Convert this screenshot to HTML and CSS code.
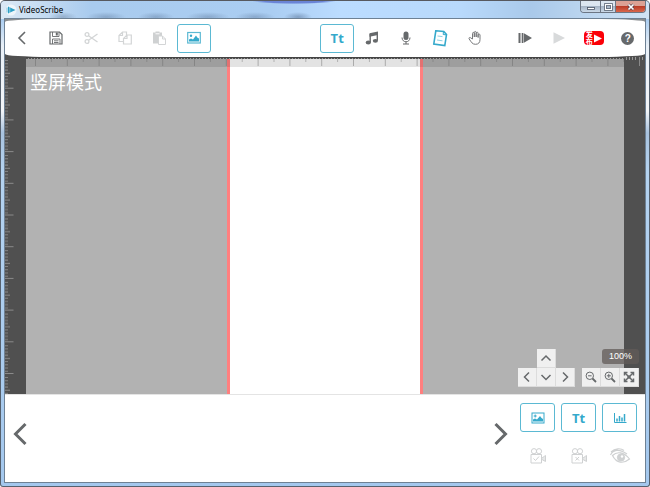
FILE: index.html
```html
<!DOCTYPE html>
<html lang="zh">
<head>
    <meta charset="UTF-8">
    <meta name="viewport" content="width=device-width, initial-scale=1.0">
    <title>VideoScribe</title>
    <link rel="stylesheet" href="styles.css">
</head>
<body>
    <div class="window">
        <header class="titlebar">
            <svg class="logo" width="12" height="12" viewBox="0 0 12 12"><circle cx="6" cy="6" r="5.500" fill="#eef5fa"/><path d="M3 2.500L10.500 6 3 9.500z" fill="#2c9fc6"/><path d="M2 3.500v5" stroke="#7cc4de"/><path d="M4.800 3v6" stroke="#d6edf5" stroke-width=".6"/></svg>
            <span class="title">VideoScribe</span>
            <div class="controls">
                <button class="min" aria-label="最小化"><svg width="10" height="8" viewBox="0 0 10 8"><rect x="1.500" y="4.500" width="7" height="2" fill="#fff" stroke="#4a5566" stroke-width=".8"/></svg></button>
                <button class="max" aria-label="最大化"><svg width="9" height="8" viewBox="0 0 9 8"><rect x="1.500" y="1.500" width="6" height="5" fill="none" stroke="#4a5566" stroke-width="2.600"/><rect x="1.500" y="1.500" width="6" height="5" fill="none" stroke="#fff" stroke-width="1.200"/></svg></button>
                <button class="close" aria-label="关闭"><svg width="10" height="8" viewBox="0 0 10 8"><path d="M2.500 1.500l5 5M7.500 1.500l-5 5" stroke="#54404a" stroke-width="3"/><path d="M2.500 1.500l5 5M7.500 1.500l-5 5" stroke="#fff" stroke-width="1.700"/></svg></button>
            </div>
        </header>

        <main class="client">
            <!-- 工具栏 -->
            <div class="toolbar-wrap">
                <nav class="toolbar">
                    <div class="group">
                        <button aria-label="返回"><svg width="16" height="16" viewBox="0 0 16 16"><path d="M11 2L5 8l6 6" fill="none" stroke="#66696b" stroke-width="1.600"/></svg></button>
                        <button aria-label="保存"><svg width="16" height="16" viewBox="0 0 16 16" fill="none" stroke="#66696b"><path d="M2 2h9.500L14 4.500V14H2z" stroke-width="1.200"/><path d="M4.500 2v4.500h6.500V2M4.500 14V9h7.500v5M6 10.800h4.500M6 12.500h4.500" stroke-width=".9"/><path d="M8.800 2.500v3" stroke-width="2"/></svg></button>
                        <button aria-label="剪切" disabled><svg width="16" height="16" viewBox="0 0 16 16" fill="none" stroke="#d3d5d6" stroke-width="1.300"><circle cx="4" cy="4.500" r="1.900"/><circle cx="4" cy="11.500" r="1.900"/><path d="M5.500 5.700L14.500 12M5.500 10.300L14.500 4"/></svg></button>
                        <button aria-label="复制" disabled><svg width="16" height="16" viewBox="0 0 16 16" fill="none" stroke="#d3d5d6" stroke-width="1.200"><path d="M6.500 11.500H2V5.500l3.500-3.500H9.500v3.500M5.500 2v3.500H2"/><path d="M10 5h4.300v9H6.500V8.500zM10 5v3.500H6.500"/></svg></button>
                        <button aria-label="粘贴" disabled><svg width="16" height="16" viewBox="0 0 16 16"><path d="M2 2.500h2.500v-1h4v1H11v3.500H7v7.500H2z" fill="#cfd1d2"/><path d="M4.500 3.800h4" stroke="#fff"/><path d="M7.500 6h4l3 3v5.500h-7zM11.500 6v3h3" fill="#fff" stroke="#d3d5d6"/></svg></button>
                        <button class="boxed" aria-label="图片"><svg width="16" height="16" viewBox="0 0 16 16"><rect x="1.700" y="2.500" width="12.600" height="10.500" fill="none" stroke="#5bb9d3" stroke-width="1.200"/><path d="M3 11.500V9.500l2-1 2 1 3-4 1.300 2 1.700 1v3z" fill="#35a9cb"/><circle cx="5" cy="5.800" r="1.200" fill="#35a9cb"/></svg></button>
                    </div>
                    <div class="group group-mid">
                        <button class="boxed">Tt</button>
                        <button aria-label="音乐"><svg width="16" height="16" viewBox="0 0 16 16" fill="#66696b"><path d="M5.500 3.200L14 1.500V5L5.500 6.700z"/><path d="M6.200 4v8.500M13.300 3v7.500" stroke="#66696b" stroke-width="1.400"/><ellipse cx="4.300" cy="12.500" rx="2.600" ry="1.900"/><ellipse cx="11.400" cy="10.800" rx="2.600" ry="1.900"/></svg></button>
                        <button aria-label="录音"><svg width="16" height="16" viewBox="0 0 16 16"><rect x="5.500" y="1.500" width="5" height="8.500" rx="2.500" fill="#66696b"/><path d="M4 7.500c0 5.700 8 5.700 8 0M8 12v2M5 14h6" fill="none" stroke="#66696b"/></svg></button>
                        <button aria-label="纸张"><svg width="18" height="18" viewBox="0 0 18 18" fill="none" stroke="#35a9cb"><path d="M4.800 1.800l8 .7 2.700 3-1.700 11L2.800 15z" stroke-width="1.600"/><path d="M12.500 2.500l-.3 3 3 .3"/><path d="M6.500 7l5 .6M6 11l5.500.8" stroke="#8ed0e2"/></svg></button>
                        <button aria-label="移动"><svg width="16" height="16" viewBox="0 0 16 16"><path d="M5.500 9V3.500c0-1.500 1.800-1.500 1.800 0V7 2.500c0-1.400 1.900-1.400 1.900 0V7 3.200c0-1.400 1.900-1.300 1.900 0V7.500 5c0-1.300 1.900-1.300 1.900 0v4.500c0 3-1.500 4.800-4.500 4.800-3.300 0-4-2-6.300-5.300-.8-1.400.8-2 1.800-.9z" fill="#fff" stroke="#77797b"/></svg></button>
                    </div>
                    <div class="group group-end">
                        <button aria-label="从当前播放"><svg width="16" height="16" viewBox="0 0 16 16" fill="#66696b"><path d="M1.500 3H3.500v10h-2zM4.700 3h1.300v10H4.700zM6.500 3l8.500 5-8.500 5z"/></svg></button>
                        <button aria-label="播放" disabled><svg width="16" height="16" viewBox="0 0 16 16"><path d="M2.500 2.200L14 8 2.500 13.800z" fill="#d8dadb"/></svg></button>
                        <button class="publish" aria-label="发布视频"><span class="badge"><span class="stamp">发布</span><svg width="9" height="9" viewBox="0 0 9 9"><path d="M1 .5l8 4-8 4z" fill="#fff"/></svg></span></button>
                        <button class="help" aria-label="帮助"><span>?</span></button>
                    </div>
                </nav>
            </div>

            <!-- 画布 -->
            <section class="stage">
                <div class="paper"></div>
                <svg class="ruler-top" width="100%" height="10">
                    <defs>
                        <pattern id="ticksTop" x="10" width="31.800" height="10" patternUnits="userSpaceOnUse">
                            <path d="M31.300 2v7" stroke="#666" opacity=".45"/>
                            <path d="M15.400 2v3" stroke="#666" opacity=".4"/>
                        </pattern>
                        <pattern id="teeth" width="3" height="3" patternUnits="userSpaceOnUse">
                            <path d="M0 .5h3" stroke="#444"/>
                            <path d="M0 1.500h2" stroke="#505050"/><path d="M2 1.500h1" stroke="#999"/>
                        </pattern>
                    </defs>
                    <rect width="100%" height="10" fill="#000" opacity=".11"/>
                    <rect width="100%" height="10" fill="url(#ticksTop)"/>
                    <rect width="100%" height="2" fill="url(#teeth)"/>
                </svg>
                <svg class="ruler-left" width="12" height="100%">
                    <defs>
                        <pattern id="ticksLeft" width="12" height="31.700" patternUnits="userSpaceOnUse">
                            <path d="M0 3.500h3M0 6.700h3M0 9.800h3M0 13h3M0 19.300h3M0 22.500h3M0 25.700h3M0 28.900h3" stroke="#858585"/>
                            <path d="M0 16.200h5" stroke="#8a8a8a"/><path d="M0 31.200h8.500" stroke="#8a8a8a"/>
                        </pattern>
                    </defs>
                    <rect width="12" height="100%" fill="url(#ticksLeft)"/>
                </svg>
                <svg class="ruler-end" width="21" height="10" viewBox="0 0 21 10"><path d="M2.500 0v3M5.500 0v3M8.500 0v3M11.500 0v3M18.500 0v3" stroke="#999"/><path d="M15.500 0v9" stroke="#8a8a8a"/></svg>
                <h1 class="mode">竖屏模式</h1>
                <div class="viewtools">
                    <div class="pad">
                        <button class="up" aria-label="上移"><svg width="12" height="12" viewBox="0 0 12 12"><path d="M1.500 8.500L6 4l4.500 4.500"/></svg></button>
                        <button class="left" aria-label="左移"><svg width="12" height="12" viewBox="0 0 12 12"><path d="M8 1.500L3.500 6 8 10.500"/></svg></button>
                        <button class="down" aria-label="下移"><svg width="12" height="12" viewBox="0 0 12 12"><path d="M1.500 4L6 8.500 10.500 4"/></svg></button>
                        <button class="right" aria-label="右移"><svg width="12" height="12" viewBox="0 0 12 12"><path d="M4 1.500L8.500 6 4 10.500"/></svg></button>
                    </div>
                    <div class="zoom">
                        <output class="percent">100%</output>
                        <div class="zoom-row">
                            <button aria-label="缩小"><svg class="thin" width="12" height="12" viewBox="0 0 12 12"><circle cx="4.800" cy="4.800" r="3.700"/><path d="M3 4.800h3.600"/><path d="M7.500 7.500L11 11" stroke-width="1.800"/></svg></button>
                            <button aria-label="放大"><svg class="thin" width="12" height="12" viewBox="0 0 12 12"><circle cx="4.800" cy="4.800" r="3.700"/><path d="M2.800 4.800h4M4.800 2.800v4"/><path d="M7.500 7.500L11 11" stroke-width="1.800"/></svg></button>
                            <button aria-label="适合窗口"><svg width="12" height="12" viewBox="0 0 12 12"><path d="M2 2l8 8M10 2l-8 8" /><path d="M1.500 4.500v-3h3M7.500 1.500h3v3M1.500 7.500v3h3M7.500 10.500h3v-3"/><rect x="4.500" y="4.500" width="3" height="3" fill="#66696b" stroke="none"/></svg></button>
                        </div>
                    </div>
                </div>
            </section>

            <!-- 时间轴 -->
            <section class="timeline">
                <button class="scroll" aria-label="向前"><svg width="16" height="24" viewBox="0 0 16 24"><path d="M12.500 2L2.500 12l10 10"/></svg></button>
                <div class="track"></div>
                <button class="scroll" aria-label="向后"><svg width="16" height="24" viewBox="0 0 16 24"><path d="M3.500 2l10 10-10 10"/></svg></button>
                <div class="adders">
                    <button class="boxed" aria-label="添加图片"><svg width="14" height="14" viewBox="0 0 14 14"><rect x="1" y="2" width="12" height="10" fill="none" stroke="#35a9cb"/><path d="M2 10.500v-2l2-1 2 1 3-3.500 1.500 2L12 8v2.500z" fill="#35a9cb"/><path d="M4.200 3.500v3M2.700 5h3" stroke="#35a9cb"/></svg></button>
                    <button class="boxed">Tt</button>
                    <button class="boxed" aria-label="添加图表"><svg width="14" height="14" viewBox="0 0 14 14" fill="none" stroke="#35a9cb"><path d="M1.500 2v9.500H13.500"/><path d="M4 10.500V7.500M6.500 10.500V5M9 10.500V6.500M11.500 10.500V3" stroke-width="1.500"/></svg></button>
                    <button class="ghost" aria-label="设置镜头" disabled><svg width="18" height="18" viewBox="0 0 18 18"><circle cx="5" cy="4.200" r="2.600"/><circle cx="10" cy="4.200" r="2.600"/><path d="M2 7.500h10.500V16H2zM4.500 11.500l2 2 3.500-4"/><path d="M13 11l3.500-2.500v6L13 12.500zM15 10v4" /></svg></button>
                    <button class="ghost" aria-label="清除镜头" disabled><svg width="18" height="18" viewBox="0 0 18 18"><circle cx="5" cy="4.200" r="2.600"/><circle cx="10" cy="4.200" r="2.600"/><path d="M2 7.500h10.500V16H2zM5.500 10l3.500 3.500M9 10l-3.500 3.500"/><path d="M13 11l3.500-2.500v6L13 12.500zM15 10v4"/></svg></button>
                    <button class="ghost" aria-label="预览" disabled><svg width="22" height="18" viewBox="0 0 22 18"><path d="M3.500 8.500C8 4 15 5 20.500 12c-6 5-13 4.500-17-3.500zM1.500 8C4 3 10 1 18 7M2 5C6 1 12 1 15 3.500" stroke-width="1.200"/><circle cx="12" cy="10.500" r="3.600" fill="#cfd1d2"/><circle cx="13" cy="9.500" r="1.200" fill="#fff" stroke="none"/></svg></button>
                </div>
            </section>
        </main>
    </div>
</body>
</html>
```
FILE: styles.css
```css
* {
    box-sizing: border-box;
}
body {
    margin: 0;
    font-family: "Liberation Sans", "Noto Sans CJK SC", sans-serif;
}
button {
    display: flex;
    align-items: center;
    justify-content: center;
    margin: 0;
    padding: 0;
    border: none;
    background: none;
    cursor: pointer;
}
svg {
    display: block;
    flex: none;
}
.window {
    display: flex;
    flex-direction: column;
    height: 100vh;
    padding: 0 4px 4px;
    border: 1px solid #56616e;
    border-top-color: #57595f;
    border-radius: 5px 5px 3px 3px;
    background: linear-gradient(to bottom, #a9ccf0 18px, #e9f0f7 45px, #f3f5f8 110px, #a9c3df 132px, #b5d3f0 170px, #a4c8ee 100%);
}

/* 标题栏 */
.titlebar {
    display: flex;
    align-items: center;
    height: 18px;
    margin: 0 -4px;
    padding-left: 4px;
    border-radius: 4px 4px 0 0;
    background:
        radial-gradient(ellipse 14px 5px at 62px 16px, rgba(60, 85, 120, 0.3), transparent),
        radial-gradient(ellipse 20px 5px at 105px 16px, rgba(60, 85, 120, 0.3), transparent),
        radial-gradient(ellipse 18px 5px at 155px 16px, rgba(60, 85, 120, 0.3), transparent),
        radial-gradient(ellipse 22px 5px at 207px 16px, rgba(60, 85, 120, 0.3), transparent),
        radial-gradient(ellipse 20px 5px at 254px 16px, rgba(60, 85, 120, 0.3), transparent),
        radial-gradient(ellipse 14px 5px at 297px 16px, rgba(60, 85, 120, 0.4), transparent),
        radial-gradient(ellipse 42px 3px at 293px 0, #6a84d6 70%, transparent),
        linear-gradient(to right, #dce9f5, #a9cbee 90px, #aacdf2 270px, #bbdcff 340px, #b8d9fb 460px, #a9c9ea 530px, #d0e3f5);
}
.logo {
    margin-right: 2px;
}
.title {
    font-family: "Noto Sans", sans-serif;
    font-size: 8px;
    line-height: 16px;
    color: #000;
}
.controls {
    display: flex;
    align-self: flex-start;
    margin: 0 3px 0 auto;
    border: 1px solid #6c7684;
    border-top: none;
    border-radius: 0 0 4px 4px;
    overflow: hidden;
}
.controls button {
    height: 11px;
    background: linear-gradient(#dce6f0 45%, #a6b5c6 50%, #cbd9e8);
    border-right: 1px solid #6c7684;
}
.controls .min {
    width: 20px;
}
.controls .max {
    width: 15px;
}
.controls .close {
    width: 29px;
    border-right: none;
    background: linear-gradient(#dca194 45%, #bb3d28 50%, #d9674c);
}

.client {
    display: flex;
    flex-direction: column;
    flex: 1;
    min-height: 0;
    background: #fff;
    outline: 1px solid #6e8194;
}

/* 工具栏 */
.toolbar-wrap {
    background: linear-gradient(#8a8d90 50%, #505050 50%);
}
.toolbar {
    display: grid;
    grid-template-columns: 206fr 109fr 172fr 16fr 137fr;
    align-items: center;
    height: 38px;
    border-radius: 45px / 3px;
    background: #fff;
}
.group {
    display: grid;
    grid-auto-flow: column;
    grid-auto-columns: 1fr;
}
.group-mid {
    grid-column: 3;
}
.group-end {
    grid-column: 5;
}
.group button {
    height: 29px;
}
.group .boxed,
.boxed {
    border: 1px solid #5bb9d3;
    border-radius: 3px;
    font-family: "Open Sans", sans-serif;
    font-size: 13px;
    font-weight: bold;
    color: #35a9cb;
}
.badge {
    display: flex;
    align-items: center;
    justify-content: center;
    width: 20px;
    height: 14px;
    border-radius: 4px;
    background: #fb0007;
}
.stamp {
    writing-mode: vertical-rl;
    font-family: "Noto Sans CJK SC", sans-serif;
    font-size: 7px;
    font-weight: bold;
    line-height: 8px;
    color: #fff;
}
.help span {
    width: 13px;
    height: 13px;
    border-radius: 50%;
    background: #66696b;
    color: #fff;
    font-size: 10px;
    font-weight: bold;
    line-height: 13px;
}

/* 画布 */
.stage {
    position: relative;
    display: flex;
    justify-content: center;
    flex: 1;
    min-height: 0;
    border: solid #505050;
    border-width: 0 21px;
    background: #b2b2b2;
}
.paper {
    width: 196px;
    border: solid #ff7f7f;
    border-width: 0 3px;
    background: #fff;
}
.ruler-top {
    position: absolute;
    top: 0;
    left: 0;
}
.ruler-left {
    position: absolute;
    top: 0;
    left: -21px;
}
.ruler-end {
    position: absolute;
    top: 0;
    right: -21px;
}
.mode {
    position: absolute;
    top: 12px;
    left: 4px;
    margin: 0;
    font-family: "Noto Sans CJK SC", sans-serif;
    font-size: 18px;
    font-weight: normal;
    line-height: 24px;
    color: #fff;
}
.viewtools {
    position: absolute;
    right: -15px;
    bottom: 7px;
    display: flex;
    align-items: flex-end;
    gap: 7px;
}
.pad {
    display: grid;
    grid-template-areas: ". up ." "left down right";
}
.up { grid-area: up; }
.left { grid-area: left; }
.down { grid-area: down; }
.right { grid-area: right; }
.viewtools button {
    width: 19px;
    height: 19px;
    background: #f0f0f0;
    border-right: 1px solid #dcdcdc;
    border-bottom: 1px solid #dcdcdc;
}
.viewtools svg {
    fill: none;
    stroke: #66696b;
    stroke-width: 1.5;
}
.viewtools .thin {
    stroke-width: 1;
}
.zoom {
    display: flex;
    flex-direction: column;
    align-items: flex-end;
    gap: 4px;
}
.zoom-row {
    display: flex;
}
.percent {
    padding: 0 7px;
    border-radius: 3px;
    background: rgba(98, 91, 88, 0.75);
    color: #fff;
    font-size: 9px;
    line-height: 15px;
}

/* 时间轴 */
.timeline {
    display: flex;
    align-items: flex-start;
    height: 88px;
    padding: 8px;
    border-top: 1px solid #e4e4e4;
}
.track {
    flex: 1;
}
.scroll {
    width: 16px;
    height: 62px;
}
.scroll svg {
    fill: none;
    stroke: #66696b;
    stroke-width: 3;
}
.adders {
    display: grid;
    grid-template-columns: repeat(3, 35px);
    gap: 9px 6px;
    margin-left: 12px;
}
.adders button {
    height: 29px;
}
.ghost svg {
    fill: none;
    stroke: #cfd1d2;
    stroke-width: 1;
}
```
